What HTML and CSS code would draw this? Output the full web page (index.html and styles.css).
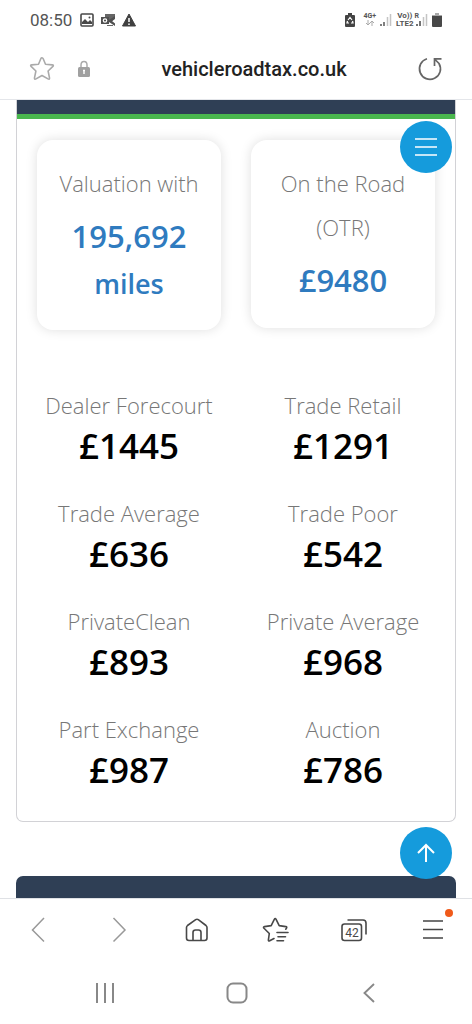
FILE: index.html
```html
<!DOCTYPE html>
<html lang="en">
<head>
<meta charset="utf-8">
<meta name="viewport" content="width=device-width, initial-scale=1">
<title>vehicleroadtax.co.uk</title>
<link rel="stylesheet" href="styles.css">
</head>
<body>
<div class="phone">
  <header class="top">
    <div class="status">
      <div class="status-left">
        <span class="clock">08:50</span>
        <svg width="14" height="14" viewBox="0 0 14 14"><rect x="1" y="1" width="12" height="12" rx="1" fill="none" stroke="#484848" stroke-width="1.6"/><path d="M2 11V9l3-3 3 3 2-2 2 2v2z" fill="#484848"/><circle cx="9.500" cy="4.500" r="1" fill="#484848"/></svg>
        <svg width="16" height="14" viewBox="0 0 16 14"><path d="M5 1h10v5l-4 3-6-5z" fill="#666"/><rect x="1" y="4" width="8" height="7" fill="#505050"/><circle cx="5" cy="7.500" r="1.700" fill="none" stroke="#fff" stroke-width="1.200"/><path d="M9 7l6-4v2.500L12 8l3 2.500V13L9 9z" fill="#505050"/><path d="M7 12.500h6" stroke="#666"/></svg>
        <svg width="14" height="14" viewBox="0 0 14 14"><path d="M7 1l6.500 12H.5z" fill="#404040" stroke="#404040" stroke-linejoin="round"/><path d="M7 5v4M7 10.500v1.500" stroke="#fff" stroke-width="1.500"/></svg>
      </div>
      <div class="status-right">
        <svg width="10" height="14" viewBox="0 0 10 14"><path d="M3 0h4v2h2q1 0 1 1v10q0 1-1 1H1q-1 0-1-1V3q0-1 1-1h2z" fill="#444"/><path d="M3 7l2-2.500L7 7M2.500 8L2 10h2M7.500 8L8 10H6" fill="none" stroke="#fff" stroke-width="1.200"/></svg>
        <div class="network"><span>4G+</span><svg width="10" height="6" viewBox="0 0 10 6"><path d="M3 0v5M1 3l2 2 2-2M7 6V1M5 3l2-2 2 2" fill="none" stroke="#aaa"/></svg></div>
        <svg width="12" height="14" viewBox="0 0 12 14"><path d="M1 11v2M4 9v4" stroke="#555" stroke-width="1.500"/><path d="M7.500 4v9M10.500 1v12" stroke="#c4c4c4" stroke-width="1.500"/></svg>
        <div class="network lte"><span>Vo))</span><span>LTE2</span></div>
        <div class="network roam"><span>R</span><svg width="12" height="14" viewBox="0 0 12 14"><path d="M1 11v2M4 8v5" stroke="#444" stroke-width="1.500"/><path d="M7.500 4v9M10.500 1v12" stroke="#c4c4c4" stroke-width="1.500"/></svg></div>
        <svg width="10" height="14" viewBox="0 0 10 14"><path d="M3 0h4v2h3v2H0V2h3z" fill="#aaa"/><path d="M0 3h10v10q0 1-1 1H1q-1 0-1-1z" fill="#484848"/></svg>
      </div>
    </div>
    <div class="address">
      <div class="address-side">
        <button class="icon-btn" aria-label="Bookmark"><svg width="26" height="26" viewBox="0 0 26 26"><path d="M13 1.800q.8 0 1.200 1l2.300 5.500 6.700.6q1.900.2.700 1.500l-4.800 4.600 1.400 6.800q.2 2-1.500 1.100L13 19.500l-6 3.400q-1.700.9-1.500-1.100L6.900 15 2.100 10.400q-1.200-1.300.7-1.500l6.700-.6 2.300-5.500q.4-1 1.200-1z" fill="none" stroke="#aaa" stroke-width="1.600" stroke-linejoin="round"/></svg></button>
        <svg width="14" height="18" viewBox="0 0 14 18"><path d="M4 8V5q0-3.500 3-3.500T10 5v3" fill="none" stroke="#aaa" stroke-width="1.500"/><rect x="1" y="7" width="12" height="10" rx="1.500" fill="#a0a0a0"/><path d="M7 10v4M6 10.500h2" stroke="#fff" stroke-width="1.400"/></svg>
      </div>
      <span class="url">vehicleroadtax.co.uk</span>
      <button class="icon-btn" aria-label="Reload"><svg width="26" height="26" viewBox="0 0 26 26"><path d="M10 2.800A10.500 10.500 0 1 0 22 7.500L18 3.500M24.500 2.800H17.500V10" fill="none" stroke="#666" stroke-width="1.700"/></svg></button>
    </div>
  </header>

  <main class="page">
    <section class="card">
      <div class="card-head"></div>
      <div class="tiles">
        <div class="tile"><p class="label">Valuation with</p><p class="price">195,692 <span class="unit">miles</span></p></div>
        <div class="tile"><p class="label">On the Road (OTR)</p><p class="price">£9480</p></div>
      </div>
      <dl class="stats">
        <div><dt>Dealer Forecourt</dt><dd>£1445</dd></div>
        <div><dt>Trade Retail</dt><dd>£1291</dd></div>
        <div><dt>Trade Average</dt><dd>£636</dd></div>
        <div><dt>Trade Poor</dt><dd>£542</dd></div>
        <div><dt>PrivateClean</dt><dd>£893</dd></div>
        <div><dt>Private Average</dt><dd>£968</dd></div>
        <div><dt>Part Exchange</dt><dd>£987</dd></div>
        <div><dt>Auction</dt><dd>£786</dd></div>
      </dl>
    </section>
    <section class="next-card"></section>
    <button class="fab menu" aria-label="Menu"><svg width="24" height="24" viewBox="0 0 24 24"><path d="M1 4h22M1 12h22M1 20h22" stroke="#fff" stroke-width="1.700"/></svg></button>
    <button class="fab up" aria-label="Back to top"><svg width="24" height="24" viewBox="0 0 24 24"><path d="M12 21V4M4 12l8-8 8 8" fill="none" stroke="#fff" stroke-width="2"/></svg></button>
  </main>

  <footer class="bottom">
    <nav class="toolbar">
      <button class="icon-btn" aria-label="Back"><svg width="28" height="28" viewBox="0 0 28 28"><path d="M19 2L7.500 14 19 25.500" fill="none" stroke="#999" stroke-width="1.500"/></svg></button>
      <button class="icon-btn" aria-label="Forward"><svg width="28" height="28" viewBox="0 0 28 28"><path d="M9.500 2L21 14 9.500 25.500" fill="none" stroke="#999" stroke-width="1.500"/></svg></button>
      <button class="icon-btn" aria-label="Home"><svg width="28" height="28" viewBox="0 0 28 28"><path d="M3.500 11.500q0-1.200 1-2L12.700 3.700q1.300-.9 2.600 0L23 9.500q1 .8 1 2V22q0 2.500-2.500 2.500h-15.500Q3.500 24.500 3.500 22zM10 24.500v-8q0-2.500 2.500-2.500h3q2.500 0 2.500 2.500v8" fill="none" stroke="#484848" stroke-width="1.600"/></svg></button>
      <button class="icon-btn" aria-label="Bookmarks"><svg width="28" height="28" viewBox="0 0 28 28"><path d="M13 22.500L8.700 24.800q-1.500.7-1.300-1l.9-6.300L3 12.300q-1.200-1.400.5-1.700l6.700-1 3.100-6.300q.9-1.600 1.800 0l3.100 6.300 6.600 1q1.500.3.700 1.600l-.8 1M16 16.500h11M17 20.700h7.500M16 24.700h6.500" fill="none" stroke="#484848" stroke-width="1.600" stroke-linejoin="round" stroke-linecap="round"/></svg></button>
      <button class="icon-btn" aria-label="Tabs, 42 open"><svg width="28" height="28" viewBox="0 0 28 28"><rect x="2" y="8" width="19.500" height="16.500" rx="2.500" fill="none" stroke="#484848" stroke-width="1.600"/><path d="M7.500 4H23q3 0 3 3v11.500" fill="none" stroke="#484848" stroke-width="1.600"/><text class="tab-count" x="12" y="21" text-anchor="middle">42</text></svg></button>
      <button class="icon-btn more" aria-label="More options"><svg width="28" height="28" viewBox="0 0 28 28"><path d="M4 5h20M4 13.500h20M4 22h20" stroke="#444" stroke-width="1.600"/></svg><span class="dot"></span></button>
    </nav>
    <nav class="system">
      <button class="icon-btn" aria-label="Recents"><svg width="24" height="24" viewBox="0 0 24 24"><path d="M4 2v20M12 2v20M20 2v20" stroke="#888" stroke-width="2"/></svg></button>
      <button class="icon-btn" aria-label="Home screen"><svg width="24" height="24" viewBox="0 0 24 24"><rect x="2.500" y="2.500" width="19" height="19" rx="5.500" fill="none" stroke="#888" stroke-width="2"/></svg></button>
      <button class="icon-btn" aria-label="System back"><svg width="24" height="24" viewBox="0 0 24 24"><path d="M17 3L7.500 12l9.500 9" fill="none" stroke="#888" stroke-width="1.900"/></svg></button>
    </nav>
  </footer>
</div>
</body>
</html>
```
FILE: styles.css
```css
* { box-sizing: border-box; }
body { margin: 0; background: #fff; font-family: "Open Sans", sans-serif; }
p, dl, dd { margin: 0; }
svg { display: block; flex: none; }

.phone { display: flex; flex-direction: column; min-height: 100vh; }

.top { border-bottom: 1px solid #e4e6ea; font-family: Roboto, sans-serif; }
.status { display: flex; justify-content: space-between; align-items: center; height: 39px; padding: 0 30px; }
.status-left { display: flex; align-items: center; gap: 6px; }
.clock { font-size: 17px; line-height: 20px; color: #555; margin-right: 2px; }
.status-right { display: flex; align-items: center; gap: 4px; color: #555; }
.status-right > svg:first-child { margin-right: 4px; }
.network { display: flex; flex-direction: column; align-items: center; font-size: 7px; line-height: 7px; font-weight: 700; }
.lte { font-size: 8px; line-height: 8px; }
.roam { flex-direction: row; align-items: flex-start; margin-left: -3px; }
.roam svg { margin-left: -3px; }

.address { display: flex; align-items: center; justify-content: space-between; height: 60px; padding: 0 29px; }
.address-side { display: flex; align-items: center; gap: 22px; }
.url { font-size: 20px; line-height: 24px; font-weight: 500; color: #222; }
.icon-btn { display: block; padding: 0; border: 0; background: none; }

.page { position: relative; flex: 1; padding: 0 16px; }
.card { border: 1px solid #d2d2d6; border-top: 0; border-radius: 0 0 7px 7px; text-align: center; }
.card-head { height: 19px; background: #2f3f55; border-bottom: 5px solid #4ab74e; }
.tiles { display: grid; grid-template-columns: 1fr 1fr; gap: 30px; align-items: start; padding: 21px 20px 0; }
.tile { padding: 21px 16px 25px; border-radius: 16px; background: #fff; box-shadow: 0 0 12px rgba(0, 0, 0, 0.13); }
.label { font-size: 22px; line-height: 44px; font-weight: 300; color: #777; }
.price { margin-top: 8px; font-size: 31px; line-height: 46px; font-weight: 600; color: #2f7bbf; }
.unit { font-size: 27px; line-height: 28px; }
.stats { display: grid; grid-template-columns: 1fr 1fr; row-gap: 26px; padding: 59px 5px 26px; }
.stats dt { font-size: 22px; line-height: 32px; font-weight: 300; color: #777; }
.stats dd { font-size: 35px; line-height: 50px; font-weight: 600; color: #000; }
.next-card { height: 22px; margin-top: 54px; border-radius: 7px 7px 0 0; background: #2f3f55; }

.fab { position: absolute; right: 20px; display: flex; align-items: center; justify-content: center; width: 52px; height: 52px; padding: 0; border: 0; border-radius: 50%; background: #159bdc; }
.menu { top: 21px; }
.up { bottom: 19px; }

.bottom { border-top: 1px solid #dfe1e5; }
.toolbar { display: flex; align-items: center; justify-content: space-between; height: 62px; padding: 0 25px; }
.tab-count { font: 400 12px Roboto, sans-serif; fill: #484848; }
.more { position: relative; }
.dot { position: absolute; top: -7px; right: -6px; width: 8px; height: 8px; border-radius: 50%; background: #f05a1a; }
.system { display: flex; align-items: center; justify-content: space-between; height: 63px; padding: 0 91px 0 93px; }
```
